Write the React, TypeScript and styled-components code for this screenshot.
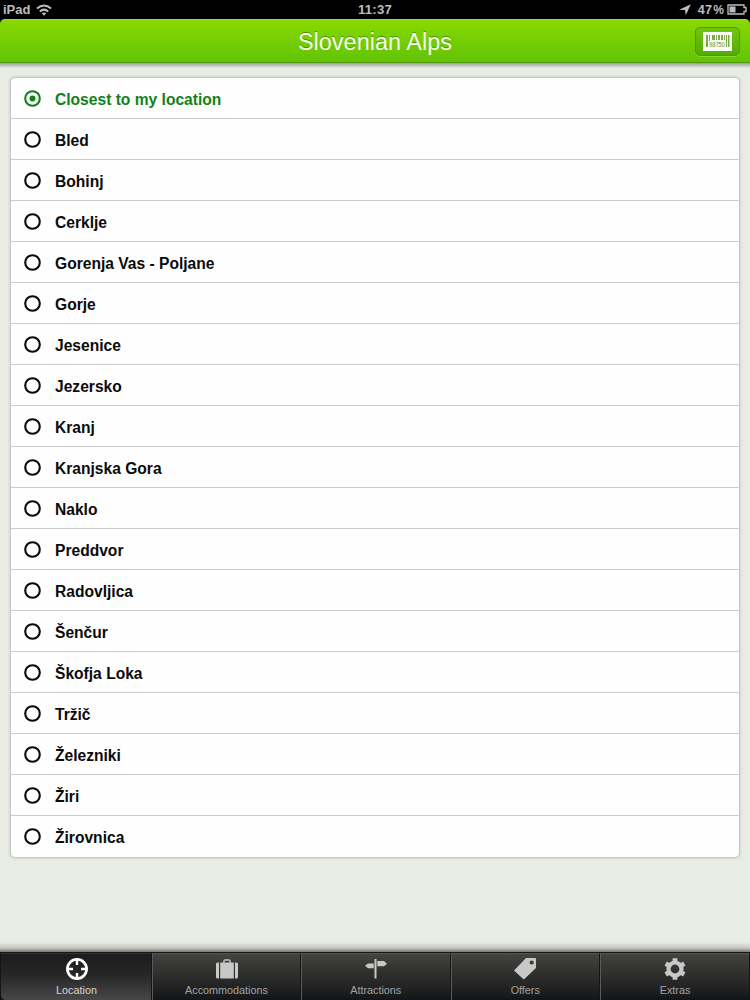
import React from 'react';
import styled, { createGlobalStyle } from 'styled-components';

const GlobalStyle = createGlobalStyle`
  * { box-sizing: border-box; }
  body { margin: 0; background: #000; font-family: "Liberation Sans", Arial, sans-serif; }
`;

const Screen = styled.div`
  width: 750px;
  height: 1000px;
  display: flex;
  flex-direction: column;
  overflow: hidden;
  background: #000;
`;

const StatusBar = styled.div`
  flex: none;
  height: 19px;
  padding: 0 3px;
  display: grid;
  grid-template-columns: 1fr auto 1fr;
  align-items: center;
  color: #bdbdbd;
  font-size: 12.6px;
  font-weight: bold;
  line-height: 18px;
`;

const StatusGroup = styled.div<{ $end?: boolean }>`
  display: flex;
  align-items: center;
  justify-content: ${(p) => (p.$end ? 'flex-end' : 'flex-start')};
  svg { display: block; flex: none; }
`;

const Device = styled.span`
  margin-right: 6px;
  font-size: 13px;
`;

const Clock = styled.span`
  font-size: 13.2px;
  letter-spacing: 0.2px;
`;

const Charge = styled.span`
  margin: 0 3px 0 7px;
  display: flex;
  gap: 1px;
  letter-spacing: 0.3px;
`;

const Percent = styled.span`
  font-size: 12px;
  letter-spacing: 0;
`;

const Header = styled.header`
  flex: none;
  height: 44px;
  padding: 0 10px;
  display: grid;
  grid-template-columns: 1fr auto 1fr;
  align-items: center;
  background: linear-gradient(#87d900, #62c306);
  border-top: 1px solid #9be02e;
  border-bottom: 1px solid #52980e;
  border-radius: 5px 5px 0 0;
`;

const Title = styled.h1`
  grid-column: 2;
  margin: 1px 0 0;
  font-size: 23.5px;
  font-weight: normal;
  line-height: 28px;
  color: #f7ffe9;
  text-shadow: 0 -1px 0 rgba(50, 100, 0, 0.6);
`;

const ScanButton = styled.button`
  justify-self: end;
  width: 45px;
  height: 29px;
  margin-top: 1px;
  padding: 0;
  display: flex;
  align-items: center;
  justify-content: center;
  border: 1px solid #4b9c0a;
  border-radius: 5px;
  background: linear-gradient(#72c512, #55ab06);
  box-shadow: 0 1px 0 rgba(160, 230, 70, 0.6);
`;

const Content = styled.main`
  flex: 1;
  min-height: 0;
  padding: 14px 10px 0;
  background:
    linear-gradient(rgba(90, 95, 85, 0.55), rgba(90, 95, 85, 0)) top / 100% 5px no-repeat,
    linear-gradient(rgba(70, 75, 65, 0), rgba(70, 75, 65, 0.22) 60%, rgba(40, 45, 35, 0.6)) bottom / 100% 10px no-repeat,
    #e9ebe5;
`;

const Card = styled.ul`
  margin: 0;
  padding: 0;
  list-style: none;
  border: 1px solid #c6c8c4;
  border-radius: 5px;
  background: #fefefe;
  box-shadow: 0 0 3px rgba(0, 0, 0, 0.18);
`;

const Row = styled.li<{ $selected?: boolean }>`
  height: 41px;
  padding: 3px 0 0 13px;
  display: flex;
  align-items: center;
  gap: 14px;
  border-bottom: 1px solid #cbcdca;
  color: ${(p) => (p.$selected ? '#12811a' : '#0b0b0b')};
  font-size: 15.6px;
  font-weight: bold;
  line-height: 20px;
  &:last-child { border-bottom-color: transparent; }
`;

const RadioMark = styled.svg`
  display: block;
  flex: none;
  width: 17px;
  height: 17px;
  margin-bottom: 3px;
`;

const TabBar = styled.nav`
  flex: none;
  height: 48px;
  display: grid;
  grid-template-columns: 152px 149px 149.5px 149.5px 150px;
  border-top: 1px solid #161616;
  background: #111;
`;

const Tab = styled.div<{ $active?: boolean }>`
  padding: 3px 0 0 ${(p) => (p.$active ? '1px' : '0')};
  display: flex;
  flex-direction: column;
  align-items: center;
  border-left: 1px solid ${(p) => (p.$active ? '#151515' : '#5a5b58')};
  border-right: 1px solid #151515;
  border-top: 1px solid ${(p) => (p.$active ? '#343434' : '#545550')};
  border-radius: ${(p) => (p.$active ? '0 0 0 5px' : '0')};
  background: ${(p) =>
    p.$active
      ? 'linear-gradient(#1d1d1d, #262626 45%, #484848)'
      : 'linear-gradient(#43443f, #30312f 40%, #191a1c 90%, #131417)'};
  color: ${(p) => (p.$active ? '#fff' : '#c8c8c8')};
  svg { display: block; flex: none; }
`;

const TabLabel = styled.span<{ $active?: boolean }>`
  margin-top: 2px;
  font-size: 10.8px;
  line-height: 14px;
  color: ${(p) => (p.$active ? '#d6d6d6' : '#a3a3a3')};
`;

const Radio = ({ checked }: { checked: boolean }) => (
  <RadioMark viewBox="0 0 17 17">
    <circle cx="8.5" cy="8.5" r="7.3" fill="none" stroke="currentColor" strokeWidth="2.1" />
    {checked && <circle cx="8.5" cy="8.5" r="3" fill="currentColor" />}
  </RadioMark>
);

const WifiIcon = () => (
  <svg width="16" height="12" viewBox="0 0 16 12" fill="none" stroke="currentColor" strokeWidth="2">
    <path d="M1 4.5Q8-1.5 15 4.5M3.8 7.4Q8 3.8 12.2 7.4" />
    <path d="M5.8 9.3Q8 7.7 10.2 9.3L8 11.7z" fill="currentColor" stroke="none" />
  </svg>
);

const ArrowIcon = () => (
  <svg width="12" height="12" viewBox="0 0 12 12" fill="currentColor">
    <path d="M11.8.2 6.8 11.3 6 6.1.2 5.8z" />
  </svg>
);

const BatteryIcon = () => (
  <svg width="20" height="11" viewBox="0 0 20 11">
    <path d="M1 1h16v2.5h2v4h-2V10H1z" fill="none" stroke="currentColor" strokeWidth="1.3" />
    <path d="M2.5 2.5h6v6h-6z" fill="currentColor" />
  </svg>
);

const BarcodeIcon = () => (
  <svg width="29" height="19" viewBox="0 0 29 19">
    <path d="M0 0h29v19H0z" fill="#fbfff4" />
    <path
      d="M3 3h2v12H3zM6 3h1v6H6zM9 3h3v5H9zM13 3h1v5h-1zM15 3h2v5h-2zM18 3h2v5h-2zM21 3h1v5h-1zM23 3h1v12h-1zM25 3h1.5v12H25z"
      fill="#7da848"
    />
    <text x="6" y="15.3" fontFamily="Liberation Sans, sans-serif" fontSize="7.5" textLength="16" lengthAdjust="spacingAndGlyphs" fill="#6a8d43">98750</text>
  </svg>
);

const TargetIcon = () => (
  <svg width="24" height="24" viewBox="0 0 24 24" fill="none" stroke="currentColor">
    <circle cx="12" cy="12" r="9.6" strokeWidth="2.7" />
    <path d="M12 2v6M12 16v6M2 12h6M16 12h6" strokeWidth="2.4" />
  </svg>
);

const SuitcaseIcon = () => (
  <svg width="24" height="24" viewBox="0 0 24 24" fill="currentColor">
    <path d="M4 5.5v16H2.5A1.5 1.5 0 0 1 1 20V7a1.5 1.5 0 0 1 1.5-1.5zM5.2 5.5h3V4A1.8 1.8 0 0 1 10 2.200h4A1.8 1.8 0 0 1 15.8 4v1.500h3v16H5.200zM9.700 5.500h4.600V3.700H9.700zM20 5.500h1.500A1.500 1.500 0 0 1 23 7v13a1.500 1.500 0 0 1-1.500 1.500H20z" fillRule="evenodd" />
  </svg>
);

const SignpostIcon = () => (
  <svg width="24" height="24" viewBox="0 0 24 24" fill="currentColor">
    <path d="M10.500 2h2v19.500h-2zM13.300 4H20l3 2.700L20 9.300h-6.700zM9.700 6.500H4L1 8.700l3 2.500h5.700z" />
  </svg>
);

const TagIcon = () => (
  <svg width="24" height="24" viewBox="0 0 24 24" fill="currentColor">
    <path d="M13 1h9q1 0 1 1v9L10.800 22.500 1 13.500zM18.700 3.400a2.100 2.100 0 1 0 0 4.200 2.100 2.100 0 0 0 0-4.200z" fillRule="evenodd" />
  </svg>
);

const GearIcon = () => (
  <svg width="24" height="24" viewBox="0 0 24 24" fill="none" stroke="currentColor">
    <circle cx="12" cy="12" r="6.5" strokeWidth="4.2" />
    <path d="M12 1.2v4M12 18.8v4M2.7 6.6 6 8.5M18 15.5l3.3 1.9M2.7 17.4 6 15.5M18 8.5l3.3-1.9" strokeWidth="4.8" />
  </svg>
);

const places = [
  'Closest to my location', 'Bled', 'Bohinj', 'Cerklje', 'Gorenja Vas - Poljane', 'Gorje',
  'Jesenice', 'Jezersko', 'Kranj', 'Kranjska Gora', 'Naklo', 'Preddvor', 'Radovljica',
  'Šenčur', 'Škofja Loka', 'Tržič', 'Železniki', 'Žiri', 'Žirovnica',
];

const tabs = [
  { label: 'Location', Icon: TargetIcon },
  { label: 'Accommodations', Icon: SuitcaseIcon },
  { label: 'Attractions', Icon: SignpostIcon },
  { label: 'Offers', Icon: TagIcon },
  { label: 'Extras', Icon: GearIcon },
];

export default function App() {
  return (
    <Screen>
      <GlobalStyle />
      <StatusBar>
        <StatusGroup>
          <Device>iPad</Device>
          <WifiIcon />
        </StatusGroup>
        <Clock>11:37</Clock>
        <StatusGroup $end>
          <ArrowIcon />
          <Charge>47<Percent>%</Percent></Charge>
          <BatteryIcon />
        </StatusGroup>
      </StatusBar>
      <Header>
        <Title>Slovenian Alps</Title>
        <ScanButton aria-label="Scan barcode">
          <BarcodeIcon />
        </ScanButton>
      </Header>
      <Content>
        <Card>
          {places.map((place, i) => (
            <Row key={place} $selected={i === 0}>
              <Radio checked={i === 0} />
              {place}
            </Row>
          ))}
        </Card>
      </Content>
      <TabBar>
        {tabs.map(({ label, Icon }, i) => (
          <Tab key={label} $active={i === 0}>
            <Icon />
            <TabLabel $active={i === 0}>{label}</TabLabel>
          </Tab>
        ))}
      </TabBar>
    </Screen>
  );
}
